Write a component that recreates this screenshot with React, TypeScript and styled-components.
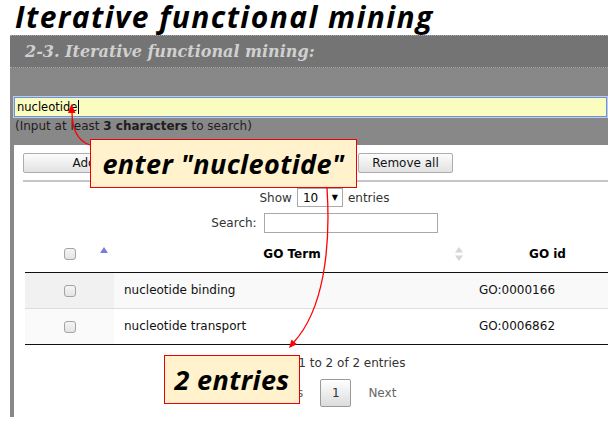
import React from 'react';
import styled, { createGlobalStyle } from 'styled-components';

const GlobalStyle = createGlobalStyle`
  html, body {
    margin: 0;
    padding: 0;
    background: #fff;
    overflow: hidden;
  }

  body {
    font-family: 'DejaVu Sans', Verdana, sans-serif;
    font-size: 12px;
    color: #222;
  }
`;

const rows = [
  { term: 'nucleotide binding', id: 'GO:0000166' },
  { term: 'nucleotide transport', id: 'GO:0006862' },
];

const App = () => {
  return (
    <Screen>
      <GlobalStyle />
      <Title>Iterative functional mining</Title>

      <Panel>
        <PanelHeader>2-3. Iterative functional mining:</PanelHeader>

        <PanelBody>
          <SearchBox>
            nucleotide
            <Caret />
          </SearchBox>
          <Hint>
            (Input at least <b>3 characters</b> to search)
          </Hint>

          <Card>
            <Toolbar>
              <Button $width={140}>Add all</Button>
              <Button $width={95} $offset={195}>
                Remove all
              </Button>
            </Toolbar>
            <Rule />

            <LengthRow>
              Show
              <FakeSelect>
                10<span>▼</span>
              </FakeSelect>
              entries
            </LengthRow>

            <FilterRow>
              Search:
              <FilterInput />
            </FilterRow>

            <Table>
              <colgroup>
                <col style={{ width: 89 }} />
                <col style={{ width: 356 }} />
                <col style={{ width: 155 }} />
              </colgroup>
              <thead>
                <tr>
                  <Th>
                    <Check />
                    <SortAsc viewBox='0 0 8 6'>
                      <path d='M4 0 L8 6 L0 6 Z' />
                    </SortAsc>
                  </Th>
                  <Th>
                    GO Term
                    <SortBoth viewBox='0 0 8 14'>
                      <path d='M4 0 L8 5.5 L0 5.5 Z' />
                      <path d='M4 14 L8 8.5 L0 8.5 Z' />
                    </SortBoth>
                  </Th>
                  <Th>GO id</Th>
                </tr>
              </thead>
              <tbody>
                {rows.map((row, i) => (
                  <Row key={row.id} $odd={i % 2 === 0}>
                    <CheckCell>
                      <Check />
                    </CheckCell>
                    <Td>{row.term}</Td>
                    <Td $pad={9}>{row.id}</Td>
                  </Row>
                ))}
              </tbody>
            </Table>

            <Info>Showing 1 to 2 of 2 entries</Info>

            <Pager>
              <PageLink>Previous</PageLink>
              <PageButton>1</PageButton>
              <PageLink>Next</PageLink>
            </Pager>
          </Card>
        </PanelBody>
      </Panel>

      <Arrows viewBox='0 0 608 425'>
        <path d='M90 145 C78 141, 72 131, 72 112' />
        <polygon points='71.5,104 68,113 75.5,113' />
        <path d='M327 188 C331 250, 323 310, 294 342' />
        <polygon points='289,348 296.9,344.2 291.5,339.6' />
      </Arrows>

      <Callout $left={90} $top={139} $width={267}>
        enter "nucleotide"
      </Callout>
      <Callout $left={164} $top={355} $width={136}>
        2 entries
      </Callout>
    </Screen>
  );
};

const Screen = styled.div`
  position: relative;
  width: 608px;
  height: 425px;
  overflow: hidden;
`;

const Title = styled.h1`
  margin: 0;
  height: 35px;
  padding-left: 15px;
  font-family: 'Open Sans', Lato, sans-serif;
  font-style: italic;
  font-weight: 700;
  font-size: 30px;
  letter-spacing: 1.4px;
  line-height: 34px;
  color: #000;
  white-space: nowrap;
`;

const Panel = styled.section`
  margin-left: 10px;
  width: 640px;
  height: 382px;
  background: #888;
  display: flex;
  flex-direction: column;
`;

const PanelHeader = styled.h2`
  margin: 0;
  height: 31px;
  padding-left: 15px;
  border-top: 1px dotted #a8a8a8;
  border-bottom: 1px dotted #a8a8a8;
  background: #747474;
  font-family: 'DejaVu Serif', Georgia, serif;
  font-style: italic;
  font-weight: 700;
  font-size: 16px;
  line-height: 31px;
  color: #d0d0d0;
`;

const PanelBody = styled.div`
  flex: 1;
  display: flex;
  flex-direction: column;
  padding: 29px 0 0 4px;
`;

const SearchBox = styled.div`
  box-sizing: border-box;
  width: 593px;
  height: 20px;
  padding-left: 2px;
  border: 1px solid #6f93d0;
  box-shadow: 0 0 0 1px #b9cdee;
  background: #fafcc0;
  font-size: 11.5px;
  line-height: 18px;
  color: #000;
  display: flex;
  align-items: center;
`;

const Caret = styled.span`
  width: 1px;
  height: 14px;
  margin-left: 1px;
  background: #000;
`;

const Hint = styled.div`
  margin: 1px 0 0 1px;
  line-height: 16px;
  color: #1e1e1e;
`;

const Card = styled.div`
  flex: 1;
  margin-top: 11px;
  padding: 8px 0 0 9px;
  background: #fff;
  display: flex;
  flex-direction: column;
  width: 603px;
`;

const Toolbar = styled.div`
  display: flex;
  height: 20px;
`;

const Button = styled.button<{ $width: number; $offset?: number }>`
  box-sizing: border-box;
  width: ${({ $width }) => $width}px;
  height: 20px;
  margin-left: ${({ $offset }) => $offset || 0}px;
  padding: 0;
  border: 1px solid #acacac;
  border-radius: 2px;
  background: linear-gradient(#fcfcfc, #e2e2e2);
  font-family: 'DejaVu Sans', Verdana, sans-serif;
  font-size: 12px;
  color: #111;
`;

const Rule = styled.div`
  margin-top: 7px;
  height: 2px;
  background: #c6c6c6;
`;

const LengthRow = styled.div`
  margin-top: 6px;
  height: 19px;
  display: flex;
  align-items: center;
  justify-content: center;
  gap: 5px;
  color: #333;
`;

const FakeSelect = styled.div`
  box-sizing: border-box;
  width: 46px;
  height: 19px;
  padding: 0 4px 0 5px;
  border: 1px solid #a9a9a9;
  display: flex;
  align-items: center;
  justify-content: space-between;
  color: #000;

  span {
    font-size: 8px;
  }
`;

const FilterRow = styled.div`
  margin-top: 6px;
  height: 20px;
  display: flex;
  align-items: center;
  justify-content: center;
  gap: 7px;
  color: #333;
`;

const FilterInput = styled.div`
  box-sizing: border-box;
  width: 174px;
  height: 20px;
  border: 1px solid #a9a9a9;
`;

const Table = styled.table`
  margin: 2px 0 0 2px;
  width: 600px;
  border-collapse: collapse;
  table-layout: fixed;
`;

const Th = styled.th`
  position: relative;
  height: 37px;
  padding: 0;
  border-bottom: 1px solid #111;
  font-size: 12px;
  font-weight: 700;
  color: #000;
  text-align: center;
  vertical-align: middle;
`;

const SortAsc = styled.svg`
  position: absolute;
  right: 6px;
  top: 12px;
  width: 8px;
  height: 6px;
  fill: #7c7ce0;
`;

const SortBoth = styled.svg`
  position: absolute;
  right: 7px;
  top: 12px;
  width: 8px;
  height: 14px;
  fill: #d6d6d6;
`;

const Row = styled.tr<{ $odd: boolean }>`
  height: 36px;
  background: ${({ $odd }) => ($odd ? '#f9f9f9' : '#fff')};
  border-bottom: 1px solid #ddd;

  td:first-child {
    background: ${({ $odd }) => ($odd ? '#f1f1f1' : '#fafafa')};
  }

  &:last-child {
    border-bottom: 1px solid #111;
  }
`;

const CheckCell = styled.td`
  padding: 0;
  text-align: center;
  vertical-align: middle;
`;

const Td = styled.td<{ $pad?: number }>`
  padding: 0 0 2px ${({ $pad }) => $pad || 10}px;
  vertical-align: middle;
  color: #111;
  white-space: nowrap;
`;

const Check = styled.span`
  display: inline-block;
  box-sizing: border-box;
  width: 12px;
  height: 12px;
  border: 1px solid #a4a4a4;
  border-radius: 3px;
  background: linear-gradient(#f4f4f4, #e4e4e4);
  vertical-align: middle;
`;

const Info = styled.div`
  margin-top: 10px;
  line-height: 16px;
  text-align: center;
  color: #333;
`;

const Pager = styled.div`
  margin-top: 8px;
  display: flex;
  align-items: center;
  justify-content: center;
  gap: 17px;
`;

const PageLink = styled.span`
  color: #666;
`;

const PageButton = styled.span`
  box-sizing: border-box;
  width: 31px;
  height: 28px;
  border: 1px solid #9a9a9a;
  border-radius: 2px;
  background: linear-gradient(#fff, #dcdcdc);
  display: flex;
  align-items: center;
  justify-content: center;
  color: #333;
`;

const Arrows = styled.svg`
  position: absolute;
  left: 0;
  top: 0;
  width: 608px;
  height: 425px;
  pointer-events: none;

  path {
    fill: none;
    stroke: #f00;
    stroke-width: 1.3;
  }

  polygon {
    fill: #f00;
  }
`;

const Callout = styled.div<{ $left: number; $top: number; $width: number }>`
  position: absolute;
  left: ${({ $left }) => $left}px;
  top: ${({ $top }) => $top}px;
  width: ${({ $width }) => $width}px;
  height: 49px;
  box-sizing: border-box;
  border: 1px solid #e00;
  background: #fff2cc;
  display: flex;
  align-items: center;
  justify-content: center;
  font-family: 'Open Sans', Lato, sans-serif;
  font-style: italic;
  font-weight: 700;
  font-size: 27px;
  letter-spacing: 0.4px;
  color: #000;
  white-space: nowrap;
`;

export default App;
